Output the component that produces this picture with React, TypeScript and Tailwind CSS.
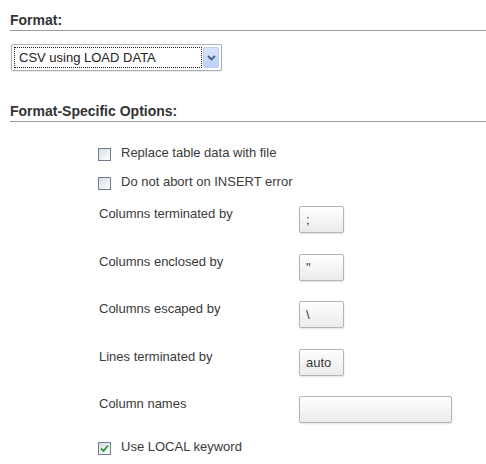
import React from 'react';

const FONT = "font-['Liberation_Sans',Arial,sans-serif]";

function Checkbox({ checked }: { checked?: boolean }) {
    return (
        <span className="mt-[3px] flex h-[13px] w-[13px] shrink-0 items-center justify-center border border-[#6e7c8c] bg-linear-to-br from-[#d6dde6] to-white">
            {checked && (
                <svg width="9" height="9" viewBox="0 0 9 9">
                    <path d="M1 4.5 L3.5 7 L8 1.5" fill="none" stroke="#2d9a2d" strokeWidth="1.8" />
                </svg>
            )}
        </span>
    );
}

function CheckRow({ label, checked, className = '' }: { label: string; checked?: boolean; className?: string }) {
    return (
        <label className={`flex items-start gap-[10px] ${className}`}>
            <Checkbox checked={checked} />
            <span className="leading-[15px]">{label}</span>
        </label>
    );
}

function Field({ label, value, wide }: { label: string; value: string; wide?: boolean }) {
    return (
        <div className="flex h-[27px] items-start">
            <span className="w-[200px] leading-[15px]">{label}</span>
            <input
                readOnly
                value={value}
                className={`h-[27px] ${wide ? 'w-[153px]' : 'w-[45px]'} rounded-[2px] border border-[#b4b4b4] bg-linear-to-b from-white to-[#ebebeb] pl-[6px] text-[13px] leading-[25px] text-[#3a3a3a] shadow-[0_1px_2px_rgba(0,0,0,0.12)] outline-none`}
            />
        </div>
    );
}

function Heading({ children, className = '' }: { children: React.ReactNode; className?: string }) {
    return (
        <h2 className={`border-b border-[#9a9a9a] pt-[12px] pb-[2px] text-[14px] leading-[16px] font-bold text-[#333] ${className}`}>
            {children}
        </h2>
    );
}

export default function App() {
    return (
        <div className={`h-[464px] w-[486px] overflow-hidden bg-white pl-[10px] text-[13px] text-[#3a3a3a] ${FONT}`}>
            <Heading>Format:</Heading>

            {/* format select */}
            <div className="mt-[13px] ml-[1px] flex h-[27px] w-[211px] items-center gap-[1px] rounded-[2px] border border-[#a7afba] bg-white p-[2px] shadow-[0_1px_1px_rgba(0,0,0,0.08)]">
                <div className="flex h-[21px] w-[188px] items-center border border-dotted border-[#222] pl-[4px] text-[13px] leading-[15px] text-[#222]">
                    CSV using LOAD DATA
                </div>
                <div className="flex h-[21px] w-[16px] items-center justify-center rounded-[2px] border border-[#bccdf0] bg-linear-to-b from-[#d9e4fb] to-[#bcd0f7]">
                    <svg width="9" height="6" viewBox="0 0 9 6">
                        <path d="M1 1 L4.5 4.5 L8 1" fill="none" stroke="#4a5d82" strokeWidth="1.8" />
                    </svg>
                </div>
            </div>

            <Heading className="mt-[20px]">Format-Specific Options:</Heading>

            <div className="pl-[88px]">
                <CheckRow className="mt-[23px]" label="Replace table data with file" />
                <CheckRow className="mt-[13px]" label="Do not abort on INSERT error" />

                <div className="mt-[16px] ml-[1px] flex flex-col gap-[20.5px]">
                    <Field label="Columns terminated by" value=";" />
                    <Field label="Columns enclosed by" value={'"'} />
                    <Field label="Columns escaped by" value={'\\'} />
                    <Field label="Lines terminated by" value="auto" />
                    <Field label="Column names" value="" wide />
                </div>

                <CheckRow className="mt-[16px]" label="Use LOCAL keyword" checked />
            </div>
        </div>
    );
}
